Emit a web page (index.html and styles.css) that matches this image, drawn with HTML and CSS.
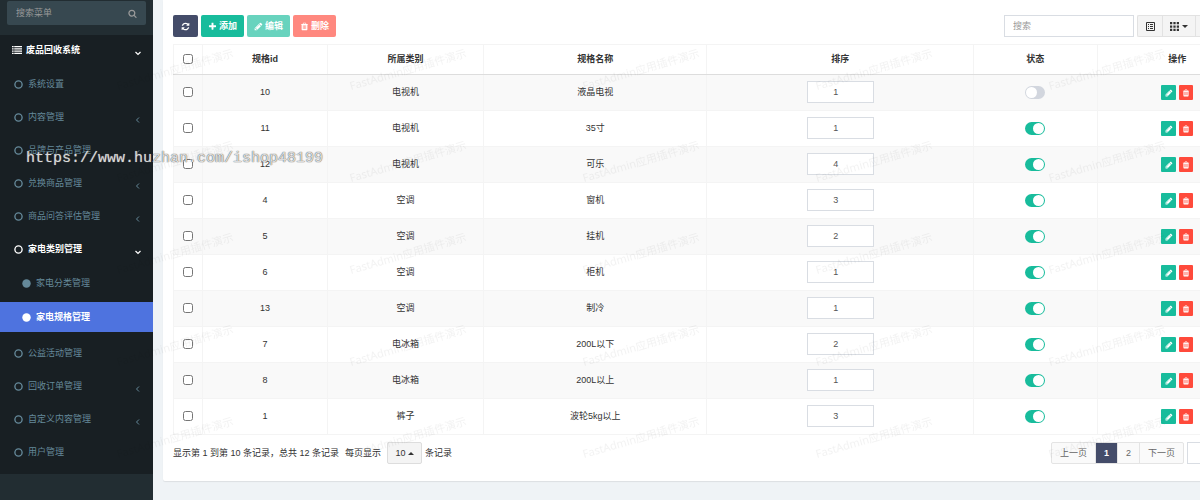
FILE: index.html
```html
<!DOCTYPE html>
<html lang="zh-CN">
<head>
    <meta charset="UTF-8">
    <meta name="viewport" content="width=device-width, initial-scale=1.0">
    <title>家电规格管理</title>
    <link rel="stylesheet" href="styles.css">
</head>
<body>
    <!-- Icon set -->
    <svg class="icon-defs" aria-hidden="true">
        <symbol id="i-pencil" viewBox="0 0 1792 1792"><path d="M491 1536l91-91-235-235-91 91v107h128v128h107zM1014 608q0-22-22-22-10 0-17 7l-542 542q-7 7-7 17 0 22 22 22 10 0 17-7l542-542q7-7 7-17zM960 416l416 416-832 832h-416v-416zM1643 512q0 53-37 90l-166 166-416-416 166-165q36-38 90-38 53 0 91 38l235 234q37 39 37 91z"/></symbol>
        <symbol id="i-plus" viewBox="0 0 1792 1792"><path d="M1600 736v192q0 40-28 68t-68 28h-416v416q0 40-28 68t-68 28h-192q-40 0-68-28t-28-68v-416h-416q-40 0-68-28t-28-68v-192q0-40 28-68t68-28h416v-416q0-40 28-68t68-28h192q40 0 68 28t28 68v416h416q40 0 68 28t28 68z"/></symbol>
        <symbol id="i-trash" viewBox="0 0 1792 1792"><path d="M704 1376v-704q0-14-9-23t-23-9h-64q-14 0-23 9t-9 23v704q0 14 9 23t23 9h64q14 0 23-9t9-23zm256 0v-704q0-14-9-23t-23-9h-64q-14 0-23 9t-9 23v704q0 14 9 23t23 9h64q14 0 23-9t9-23zm256 0v-704q0-14-9-23t-23-9h-64q-14 0-23 9t-9 23v704q0 14 9 23t23 9h64q14 0 23-9t9-23zm-544-992h448l-48-117q-7-9-17-11h-317q-10 2-17 11zm928 32v64q0 14-9 23t-23 9h-96v948q0 83-47 143.5t-113 60.5h-832q-66 0-113-58.5t-47-141.5v-952h-96q-14 0-23-9t-9-23v-64q0-14 9-23t23-9h309l70-167q15-37 54-63t79-26h320q40 0 79 26t54 63l70 167h309q14 0 23 9t9 23z"/></symbol>
        <symbol id="i-refresh" viewBox="0 0 1792 1792"><path d="M1639 1056q0 5-1 7-64 268-268 434.5t-478 166.5q-146 0-282.5-55t-243.5-157l-129 129q-19 19-45 19t-45-19-19-45v-448q0-26 19-45t45-19h448q26 0 45 19t19 45-19 45l-137 137q71 66 161 102t187 36q134 0 250-65t186-179q11-17 53-117 8-23 30-23h192q13 0 22.5 9.5t9.5 22.5zm25-800v448q0 26-19 45t-45 19h-448q-26 0-45-19t-19-45 19-45l138-138q-148-137-349-137-134 0-250 65t-186 179q-11 17-53 117-8 23-30 23h-199q-13 0-22.5-9.5t-9.5-22.5v-7q65-268 270-434.5t480-166.5q146 0 284 55.5t245 156.5l130-129q19-19 45-19t45 19 19 45z"/></symbol>
        <symbol id="i-search" viewBox="0 0 1792 1792"><path d="M1216 832q0-185-131.5-316.5t-316.5-131.5-316.5 131.5-131.5 316.5 131.5 316.5 316.5 131.5 316.5-131.5 131.5-316.5zm512 832q0 52-38 90t-90 38q-54 0-90-38l-343-342q-179 124-399 124-143 0-273.5-55.5t-225-150-150-225-55.5-273.5 55.5-273.5 150-225 225-150 273.5-55.5 273.5 55.5 225 150 150 225 55.5 273.5q0 220-124 399l343 343q37 37 37 90z"/></symbol>
        <symbol id="i-list" viewBox="0 0 18 14"><path d="M0 0h3v2H0zM4 0h14v2H4zM0 4h3v2H0zM4 4h14v2H4zM0 8h3v2H0zM4 8h14v2H4zM0 12h3v2H0zM4 12h14v2H4z"/></symbol>
        <symbol id="i-ring" viewBox="0 0 10 10"><circle cx="5" cy="5" r="4" fill="none" stroke="currentColor" stroke-width="1.5"/></symbol>
        <symbol id="i-dot" viewBox="0 0 10 10"><circle cx="5" cy="5" r="4.7"/></symbol>
        <symbol id="i-left" viewBox="0 0 8 8"><path d="M5 1.5L2.5 4 5 6.5" fill="none" stroke="currentColor" stroke-width="1"/></symbol>
        <symbol id="i-down" viewBox="0 0 8 8"><path d="M1.5 3L4 5.5 6.5 3" fill="none" stroke="currentColor" stroke-width="1.2"/></symbol>
        <symbol id="i-detail" viewBox="0 0 18 18"><path d="M1 1h16v16H1z" fill="none" stroke="currentColor" stroke-width="2"/><path d="M4 4h2v2H4zM8 4h6v2H8zM4 8h2v2H4zM8 8h6v2H8zM4 12h2v2H4zM8 12h6v2H8z"/></symbol>
        <symbol id="i-grid" viewBox="0 0 16 16"><path d="M0 0h4v4H0zM6 0h4v4H6zM12 0h4v4h-4zM0 6h4v4H0zM6 6h4v4H6zM12 6h4v4h-4zM0 12h4v4H0zM6 12h4v4H6zM12 12h4v4h-4z"/></symbol>
        <symbol id="i-export" viewBox="0 0 16 16"><path d="M1 3h8v2H3v8h10V9h2v6H1zM9 0h7v7l-2-2-5 5-2-2 5-5z"/></symbol>
    </svg>

    <div class="wrapper">
        <aside class="sidebar">
            <form class="menu-search">
                <input type="text" placeholder="搜索菜单" aria-label="搜索菜单">
                <button type="button" aria-label="搜索"><svg class="icon"><use href="#i-search"/></svg></button>
            </form>
            <ul class="menu">
                <li class="open root"><a href="#"><svg class="icon icon-list"><use href="#i-list"/></svg><span>废品回收系统</span><svg class="arrow"><use href="#i-down"/></svg></a></li>
                <li><a href="#"><svg class="icon"><use href="#i-ring"/></svg><span>系统设置</span></a></li>
                <li><a href="#"><svg class="icon"><use href="#i-ring"/></svg><span>内容管理</span><svg class="arrow"><use href="#i-left"/></svg></a></li>
                <li><a href="#"><svg class="icon"><use href="#i-ring"/></svg><span>品牌与产品管理</span><svg class="arrow"><use href="#i-left"/></svg></a></li>
                <li><a href="#"><svg class="icon"><use href="#i-ring"/></svg><span>兑换商品管理</span><svg class="arrow"><use href="#i-left"/></svg></a></li>
                <li><a href="#"><svg class="icon"><use href="#i-ring"/></svg><span>商品问答评估管理</span><svg class="arrow"><use href="#i-left"/></svg></a></li>
                <li class="open">
                    <a href="#"><svg class="icon"><use href="#i-ring"/></svg><span>家电类别管理</span><svg class="arrow"><use href="#i-down"/></svg></a>
                    <ul class="submenu">
                        <li><a href="#"><svg class="icon"><use href="#i-dot"/></svg><span>家电分类管理</span></a></li>
                        <li class="active"><a href="#"><svg class="icon"><use href="#i-dot"/></svg><span>家电规格管理</span></a></li>
                    </ul>
                </li>
                <li><a href="#"><svg class="icon"><use href="#i-ring"/></svg><span>公益活动管理</span></a></li>
                <li><a href="#"><svg class="icon"><use href="#i-ring"/></svg><span>回收订单管理</span><svg class="arrow"><use href="#i-left"/></svg></a></li>
                <li><a href="#"><svg class="icon"><use href="#i-ring"/></svg><span>自定义内容管理</span><svg class="arrow"><use href="#i-left"/></svg></a></li>
                <li><a href="#"><svg class="icon"><use href="#i-ring"/></svg><span>用户管理</span></a></li>
            </ul>
        </aside>

        <main class="content">
            <section class="panel">
                <div class="toolbar">
                    <button type="button" class="btn btn-primary" aria-label="刷新"><svg class="icon"><use href="#i-refresh"/></svg></button>
                    <button type="button" class="btn btn-success"><svg class="icon"><use href="#i-plus"/></svg>添加</button>
                    <button type="button" class="btn btn-success" disabled><svg class="icon"><use href="#i-pencil"/></svg>编辑</button>
                    <button type="button" class="btn btn-danger" disabled><svg class="icon"><use href="#i-trash"/></svg>删除</button>
                    <input type="text" class="field search" placeholder="搜索" aria-label="搜索">
                    <div class="btn-group">
                        <button type="button" aria-label="切换"><svg class="icon"><use href="#i-detail"/></svg></button>
                        <button type="button" aria-label="列" class="wide"><svg class="icon"><use href="#i-grid"/></svg><i class="caret"></i></button>
                        <button type="button" aria-label="导出" class="wide"><svg class="icon"><use href="#i-export"/></svg><i class="caret"></i></button>
                        <button type="button" aria-label="普通搜索"><svg class="icon"><use href="#i-search"/></svg></button>
                    </div>
                </div>

                <table class="table">
                    <colgroup>
                        <col class="c-check"><col class="c-id"><col class="c-type"><col class="c-name"><col class="c-sort"><col class="c-state"><col class="c-ops">
                    </colgroup>
                    <thead>
                        <tr>
                            <th><input type="checkbox" class="check" aria-label="全选"></th>
                            <th>规格id</th>
                            <th>所属类别</th>
                            <th>规格名称</th>
                            <th>排序</th>
                            <th>状态</th>
                            <th>操作</th>
                        </tr>
                    </thead>
                    <tbody id="specBody"></tbody>
                </table>

                <div class="table-footer">
                    <span class="page-label">显示第 1 到第 10 条记录，总共 12 条记录</span>
                    <span class="page-label">每页显示</span>
                    <button type="button" class="page-size">10<i class="caret up"></i></button>
                    <span>条记录</span>
                    <nav class="pagination">
                        <a href="#">上一页</a>
                        <a href="#" class="current">1</a>
                        <a href="#">2</a>
                        <a href="#">下一页</a>
                    </nav>
                    <input type="text" class="field jump" aria-label="页码">
                </div>
            </section>
        </main>
    </div>

    <!-- Watermarks laid over the whole page -->
    <svg class="watermark" aria-hidden="true">
        <pattern id="wm" x="110" y="20" width="233" height="92" patternUnits="userSpaceOnUse">
            <text x="8" y="70" transform="rotate(-16 8 70)">FastAdmin应用插件演示</text>
        </pattern>
        <rect width="100%" height="470" fill="url(#wm)"/>
    </svg>
    <div class="site-mark">https://www.huzhan.com/ishop48199</div>

    <script>
        const specs = [
            { id: 10, type: '电视机', name: '液晶电视', sort: 1, on: false },
            { id: 11, type: '电视机', name: '35寸', sort: 1, on: true },
            { id: 12, type: '电视机', name: '可乐', sort: 4, on: true },
            { id: 4, type: '空调', name: '窗机', sort: 3, on: true },
            { id: 5, type: '空调', name: '挂机', sort: 2, on: true },
            { id: 6, type: '空调', name: '柜机', sort: 1, on: true },
            { id: 13, type: '空调', name: '制冷', sort: 1, on: true },
            { id: 7, type: '电冰箱', name: '200L以下', sort: 2, on: true },
            { id: 8, type: '电冰箱', name: '200L以上', sort: 1, on: true },
            { id: 1, type: '裤子', name: '波轮5kg以上', sort: 3, on: true }
        ];

        document.getElementById('specBody').innerHTML = specs.map(s => `
            <tr>
                <td><input type="checkbox" class="check" aria-label="选择 ${s.id}"></td>
                <td>${s.id}</td>
                <td>${s.type}</td>
                <td>${s.name}</td>
                <td><input type="text" class="field sort" value="${s.sort}" aria-label="排序"></td>
                <td><input type="checkbox" class="switch" aria-label="状态" ${s.on ? 'checked' : ''}></td>
                <td>
                    <div class="ops">
                        <button type="button" class="btn-xs edit" aria-label="编辑"><svg class="icon"><use href="#i-pencil"/></svg></button>
                        <button type="button" class="btn-xs del" aria-label="删除"><svg class="icon"><use href="#i-trash"/></svg></button>
                    </div>
                </td>
            </tr>`).join('');
    </script>
</body>
</html>
```
FILE: styles.css
```css
* {
    box-sizing: border-box;
}
body {
    margin: 0;
    overflow: hidden;
    background-color: #eff3f6;
    color: #333;
    font-family: "Liberation Sans", "Noto Sans CJK SC", sans-serif;
    font-size: 9px;
    line-height: 14px;
}
button, input {
    font: inherit;
    margin: 0;
}
button {
    cursor: pointer;
}
a {
    text-decoration: none;
}
ul {
    list-style: none;
    margin: 0;
    padding: 0;
}
.icon-defs {
    position: absolute;
    width: 0;
    height: 0;
}
.icon {
    width: 9px;
    height: 9px;
    flex: none;
    fill: currentColor;
}
.wrapper {
    display: flex;
    min-height: 100vh;
}

/* Sidebar */
.sidebar {
    flex: none;
    width: 153px;
    background-color: #222d32;
}
.menu-search {
    display: flex;
    margin: 1px 7px 10px;
    height: 24px;
    background-color: #374850;
    border-radius: 2px;
}
.menu-search input {
    flex: 1;
    min-width: 0;
    padding: 0 9px;
    border: 0;
    background: transparent;
    color: #fff;
}
.menu-search input::placeholder {
    color: #999;
}
.menu-search button {
    display: flex;
    align-items: center;
    padding: 0 9px;
    border: 0;
    background: transparent;
    color: #999;
}
.menu {
    padding-bottom: 4px;
    background-color: #181f23;
}
.menu li {
    margin-bottom: 3px;
}
.menu a {
    display: flex;
    align-items: center;
    gap: 5px;
    height: 30px;
    padding: 0 11px 0 14px;
    color: #65899a;
}
.menu .icon-list {
    width: 10px;
    height: 8px;
}
.menu .root {
    margin-bottom: 4px;
}
.menu .root a {
    gap: 4px;
    padding-left: 12px;
}
.menu .open > a {
    color: #fff;
    font-weight: bold;
}
.arrow {
    width: 8px;
    height: 8px;
    margin: 5px 0 0 auto;
    fill: currentColor;
}
.menu .submenu {
    padding: 4px 0 3px;
}
.menu .submenu li {
    margin-bottom: 4px;
}
.menu .submenu a {
    padding-left: 22px;
}
.menu .submenu .active {
    margin-bottom: 0;
}
.menu .submenu .active a {
    background-color: #4e73df;
    color: #fff;
    font-weight: bold;
}

/* Content: the table is wider than the visible area */
.content {
    flex: 1;
    margin-right: -68px;
    padding-left: 10px;
}
.panel {
    padding: 15px 10px 17px;
    background-color: #fff;
    border-radius: 0 0 2px 2px;
    box-shadow: 0 1px 1px rgba(0, 0, 0, 0.08);
}
.toolbar {
    display: flex;
    gap: 3px;
    margin-bottom: 7px;
}
.btn {
    display: flex;
    align-items: center;
    justify-content: center;
    gap: 2px;
    height: 22px;
    padding: 0 7px;
    border: 0;
    border-radius: 2px;
    color: #fff;
    font-weight: bold;
}
.btn-primary {
    padding: 0 8px;
    background-color: #444c69;
}
.btn-success {
    background-color: #18bc9c;
}
.btn-danger {
    background-color: #ff4a3b;
}
.btn:disabled {
    opacity: 0.65;
}
.field {
    height: 22px;
    border: 1px solid #d9dde3;
    background-color: #fff;
    color: #555;
}
.field::placeholder {
    color: #999;
}
.search {
    width: 130px;
    margin-left: auto;
    padding: 0 8px;
}
.btn-group {
    display: flex;
}
.btn-group button {
    display: flex;
    align-items: center;
    justify-content: center;
    gap: 3px;
    width: 25px;
    height: 22px;
    padding: 0;
    border: 1px solid #e2e2e2;
    border-right-width: 0;
    background-color: #f4f4f4;
    color: #333;
}
.btn-group button:first-child {
    border-radius: 2px 0 0 2px;
}
.btn-group button:last-child {
    width: 30px;
    border-right-width: 1px;
    border-radius: 0 2px 2px 0;
}
.btn-group .wide {
    width: 33px;
}
.caret {
    border-top: 3px solid #333;
    border-left: 3px solid transparent;
    border-right: 3px solid transparent;
}
.caret.up {
    border-top: 0;
    border-bottom: 3px solid #333;
}

/* Table */
.table {
    width: 100%;
    table-layout: fixed;
    border-collapse: collapse;
}
.c-check { width: 2.7%; }
.c-id { width: 11.5%; }
.c-type { width: 14.4%; }
.c-name { width: 20.6%; }
.c-sort { width: 24.6%; }
.c-state { width: 11.4%; }
.c-ops { width: 14.8%; }
th, td {
    padding: 0 0 2px;
    text-align: center;
    vertical-align: middle;
    border: 1px solid #f4f4f4;
}
th {
    height: 30px;
    border-bottom: 1px solid #ddd;
}
td {
    height: 36px;
}
td:last-child {
    padding: 0;
}
tbody tr:nth-child(odd) {
    background-color: #f9f9f9;
}
.table input {
    vertical-align: middle;
}
.check {
    width: 10px;
    height: 10px;
}
.sort {
    width: 67px;
    padding: 0 9px 0 0;
    text-align: center;
}
.switch {
    appearance: none;
    display: inline-flex;
    width: 20px;
    height: 13px;
    padding: 1px;
    border-radius: 7px;
    background-color: #d2d6de;
}
.switch::before {
    content: "";
    width: 11px;
    height: 11px;
    border-radius: 50%;
    background-color: #fff;
}
.switch:checked {
    justify-content: flex-end;
    background-color: #18bc9c;
}
.ops {
    display: flex;
    justify-content: center;
    gap: 3px;
}
.btn-xs {
    display: flex;
    align-items: center;
    justify-content: center;
    width: 15px;
    height: 15px;
    padding: 0;
    border: 0;
    border-radius: 1px;
    color: #fff;
}
.btn-xs .icon {
    width: 8px;
    height: 8px;
}
.edit {
    background-color: #18bc9c;
}
.del {
    width: 14px;
    background-color: #ff4a3b;
}

/* Footer */
.table-footer {
    display: flex;
    align-items: center;
    gap: 3px;
    padding-top: 7px;
}
.page-label {
    margin-right: 3px;
}
.page-size {
    display: flex;
    align-items: center;
    justify-content: center;
    gap: 2px;
    width: 35px;
    height: 22px;
    padding: 0;
    border: 1px solid #ddd;
    border-radius: 2px;
    background-color: #f4f4f4;
    color: #333;
}
.pagination {
    display: flex;
    margin-left: auto;
    border: 1px solid #e4e4e4;
    border-radius: 2px;
    background-color: #fafafa;
}
.pagination a {
    padding: 3px 8px;
    border-left: 1px solid #e4e4e4;
    color: #666;
}
.pagination a:first-child {
    border-left: 0;
}
.pagination .current {
    background-color: #444c69;
    color: #fff;
    font-weight: bold;
}
.jump {
    width: 71px;
}

/* Watermarks */
.watermark {
    position: absolute;
    top: 0;
    left: 0;
    width: 100%;
    height: 100%;
    pointer-events: none;
}
.watermark text {
    font-family: "Noto Sans", "Noto Sans CJK SC", sans-serif;
    font-size: 11px;
    fill: rgba(0, 0, 0, 0.05);
}
.site-mark {
    position: absolute;
    top: 149px;
    left: 26px;
    color: rgba(255, 255, 255, 0.8);
    font-family: "Liberation Mono", monospace;
    font-size: 15px;
    line-height: 20px;
    text-shadow: 0 0 1px #555, 0 0 1px #777;
    pointer-events: none;
}
```
